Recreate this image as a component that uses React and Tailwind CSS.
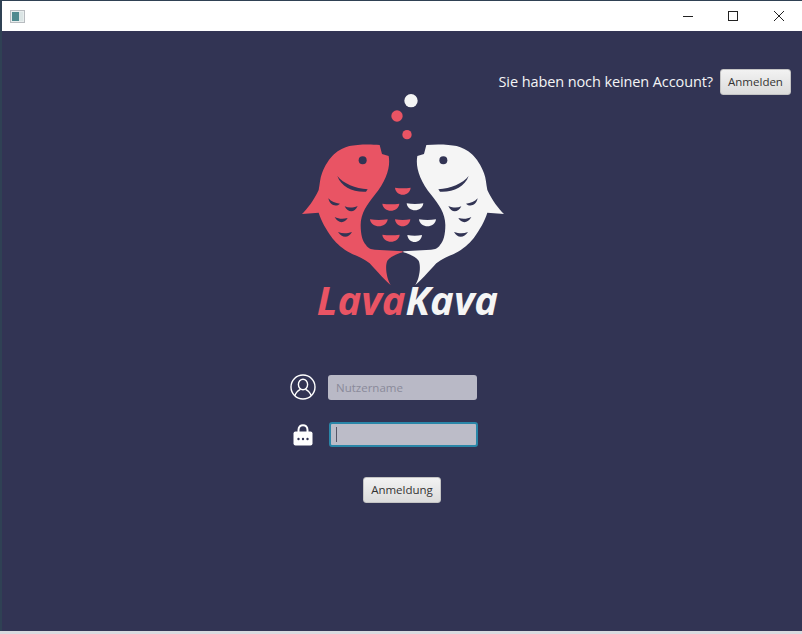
import React from 'react'

const uiFont = "font-['Open_Sans','Noto_Sans',sans-serif]"

const redScales = [
  [315, 308, 362],
  [277, 356, 328],
  [240, 403, 293],
  [315, 403, 361],
  [277, 449, 329],
]

const whiteScales = [
  [350, 355, 400],
  [387, 403, 438],
  [352, 450, 396],
]

// half moon: nearly flat on top, round underneath
const scalePath = ([x1, y, x2]) => {
  const cx = (x1 + x2) / 2
  return `M${x1} ${y} Q${cx} ${y + 4} ${x2} ${y} C${x2 - 3} ${y + 28} ${x1 + 3} ${y + 28} ${x1} ${y} Z`
}

function Fish({ color, mirror }) {
  return (
    <g transform={mirror ? 'matrix(-1 0 0 1 678 0)' : undefined}>
      <path
        fill={color}
        d="M269 180 L276 207 L296 213 C302 245 290 285 254 330 C232 358 212 385 212 420 C212 450 218 470 228 480 C234 490 242 493 255 494 L338 499 L338 502 C316 508 300 516 292 527 C284 545 290 580 302 600 C290 592 262 560 239 535 C216 516 190 510 174 500 C150 485 135 470 124 455 C110 435 94 410 86 383 L36 387 C52 372 72 345 86 315 C90 295 90 280 96 265 C105 240 118 222 132 208 C146 194 164 187 178 183 C200 178 240 177 269 180 Z"
      />
      <circle cx="218" cy="226" r="12" fill="#323454" />
      <path fill="#323454" d="M142 273 C160 296 196 310 233 313 L228 320 C188 322 154 306 142 273 Z" />
      <path fill="#323454" d="M115 340 C124 350 136 354 150 356 C140 366 120 364 115 340 Z" />
      <path fill="#323454" d="M164 364 C176 369 188 369 203 363 C194 384 174 384 164 364 Z" />
      <path fill="#323454" d="M134 396 C146 402 158 403 173 399 C164 416 144 416 134 396 Z" />
      <path fill="#323454" d="M144 441 C158 446 170 446 186 441 C176 460 156 460 144 441 Z" />
    </g>
  )
}

function Logo() {
  return (
    <svg viewBox="0 24 675 582" className="block w-[225px] h-[194px] -mt-[2px]">
      <circle cx="363" cy="47" r="20" fill="#f5f5f5" />
      <circle cx="321" cy="93" r="17" fill="#e95464" />
      <circle cx="351" cy="149" r="14" fill="#e95464" />
      <Fish color="#e95464" />
      <Fish color="#f5f5f5" mirror />
      {redScales.map((s) => (
        <path key={s.join()} d={scalePath(s)} fill="#e95464" />
      ))}
      {whiteScales.map((s) => (
        <path key={s.join()} d={scalePath(s)} fill="#f5f5f5" />
      ))}
    </svg>
  )
}

function UserIcon() {
  return (
    <svg viewBox="0 0 26 26" className="w-[26px] h-[26px]" fill="none" stroke="white" strokeWidth="1.4">
      <circle cx="13" cy="13" r="12" />
      <ellipse cx="13" cy="10.5" rx="4.6" ry="5.2" />
      <path d="M5 21.5 C6 17.5 9 16 10.5 15.2 M21 21.5 C20 17.5 17 16 15.5 15.2" />
    </svg>
  )
}

function LockIcon() {
  return (
    <svg viewBox="0 0 20 22" className="w-5 h-[22px]">
      <path d="M5.5 9 V6 C5.5 -0.5 14.5 -0.5 14.5 6 V9" fill="none" stroke="white" strokeWidth="2" />
      <rect x="0.5" y="7.5" width="19" height="14" rx="2" fill="white" />
      <circle cx="5.5" cy="15" r="1.2" fill="#323454" />
      <circle cx="10" cy="15" r="1.2" fill="#323454" />
      <circle cx="14.5" cy="15" r="1.2" fill="#323454" />
    </svg>
  )
}

function FxButton({ children, className }) {
  return (
    <button
      className={`h-[26px] rounded-[3px] bg-gradient-to-b from-[#f2f2f2] to-[#dcdcdc] border border-[#c4c4c4] text-[11.5px] text-[#333333] ${className}`}
    >
      {children}
    </button>
  )
}

export default function App() {
  return (
    <div className={`w-[802px] h-[634px] flex flex-col overflow-hidden bg-[#d9dadf] ${uiFont}`}>
      <div className="flex-1 flex flex-col border-t border-l-2 border-[#2f4154]">
        {/* window title bar */}
        <div className="h-[30px] shrink-0 bg-white flex items-center justify-between">
          <div className="ml-2 w-[15px] h-[13px] border border-[#b8bcc0] bg-[#e8eeee] flex p-[1px]">
            <div className="w-[7px] bg-[#4f8a8f]" />
            <div className="flex-1 bg-[#dbe5e5]" />
          </div>
          <svg viewBox="0 0 120 12" className="w-[120px] h-3 mr-[2px]" fill="none" stroke="#222222">
            <path d="M3 6.5 H13" />
            <rect x="48.5" y="1.5" width="9" height="9" />
            <path d="M94 1 L104 11 M104 1 L94 11" />
          </svg>
        </div>

        <div className="flex-1 bg-[#323454] flex flex-col">
          <div className="flex items-center justify-end gap-[7px] pt-[38px] pr-[11px]">
            <span className="text-[14.5px] tracking-[-0.1px] pb-[1px] text-[#f4f4f6]">Sie haben noch keinen Account?</span>
            <FxButton className="w-[71px]">Anmelden</FxButton>
          </div>

          <div className="ml-[288px] w-[225px] flex flex-col">
            <Logo />
            <div className="text-[40px] leading-[40px] font-bold italic text-center pl-[10px] font-['Open_Sans',sans-serif] -mt-[7px]">
              <span className="text-[#e95464]">Lava</span>
              <span className="text-[#f5f5f5]">Kava</span>
            </div>

            <div className="mt-[54px] flex items-center">
              <div className="w-[26px] flex justify-center"><UserIcon /></div>
              <input
                readOnly
                placeholder="Nutzername"
                className="ml-3 w-[149px] h-[25px] rounded-[3px] bg-[#b9b9c6] px-2 text-[11.5px] placeholder:text-[#8a8a9a] outline-none"
              />
            </div>

            <div className="mt-[22px] flex items-center">
              <div className="w-[26px] flex justify-center"><LockIcon /></div>
              <div className="ml-[13px] w-[149px] h-[25px] rounded-[3px] bg-[#bcbcc8] border-2 border-[#2a86a8] flex items-center pl-[5px]">
                <div className="w-[1px] h-[15px] bg-[#555566]" />
              </div>
            </div>

            <FxButton className="mt-[30px] ml-[73px] w-[78px]">Anmeldung</FxButton>
          </div>
        </div>
      </div>
      <div className="h-[3px] shrink-0 bg-[#d9dadf]" />
    </div>
  )
}
